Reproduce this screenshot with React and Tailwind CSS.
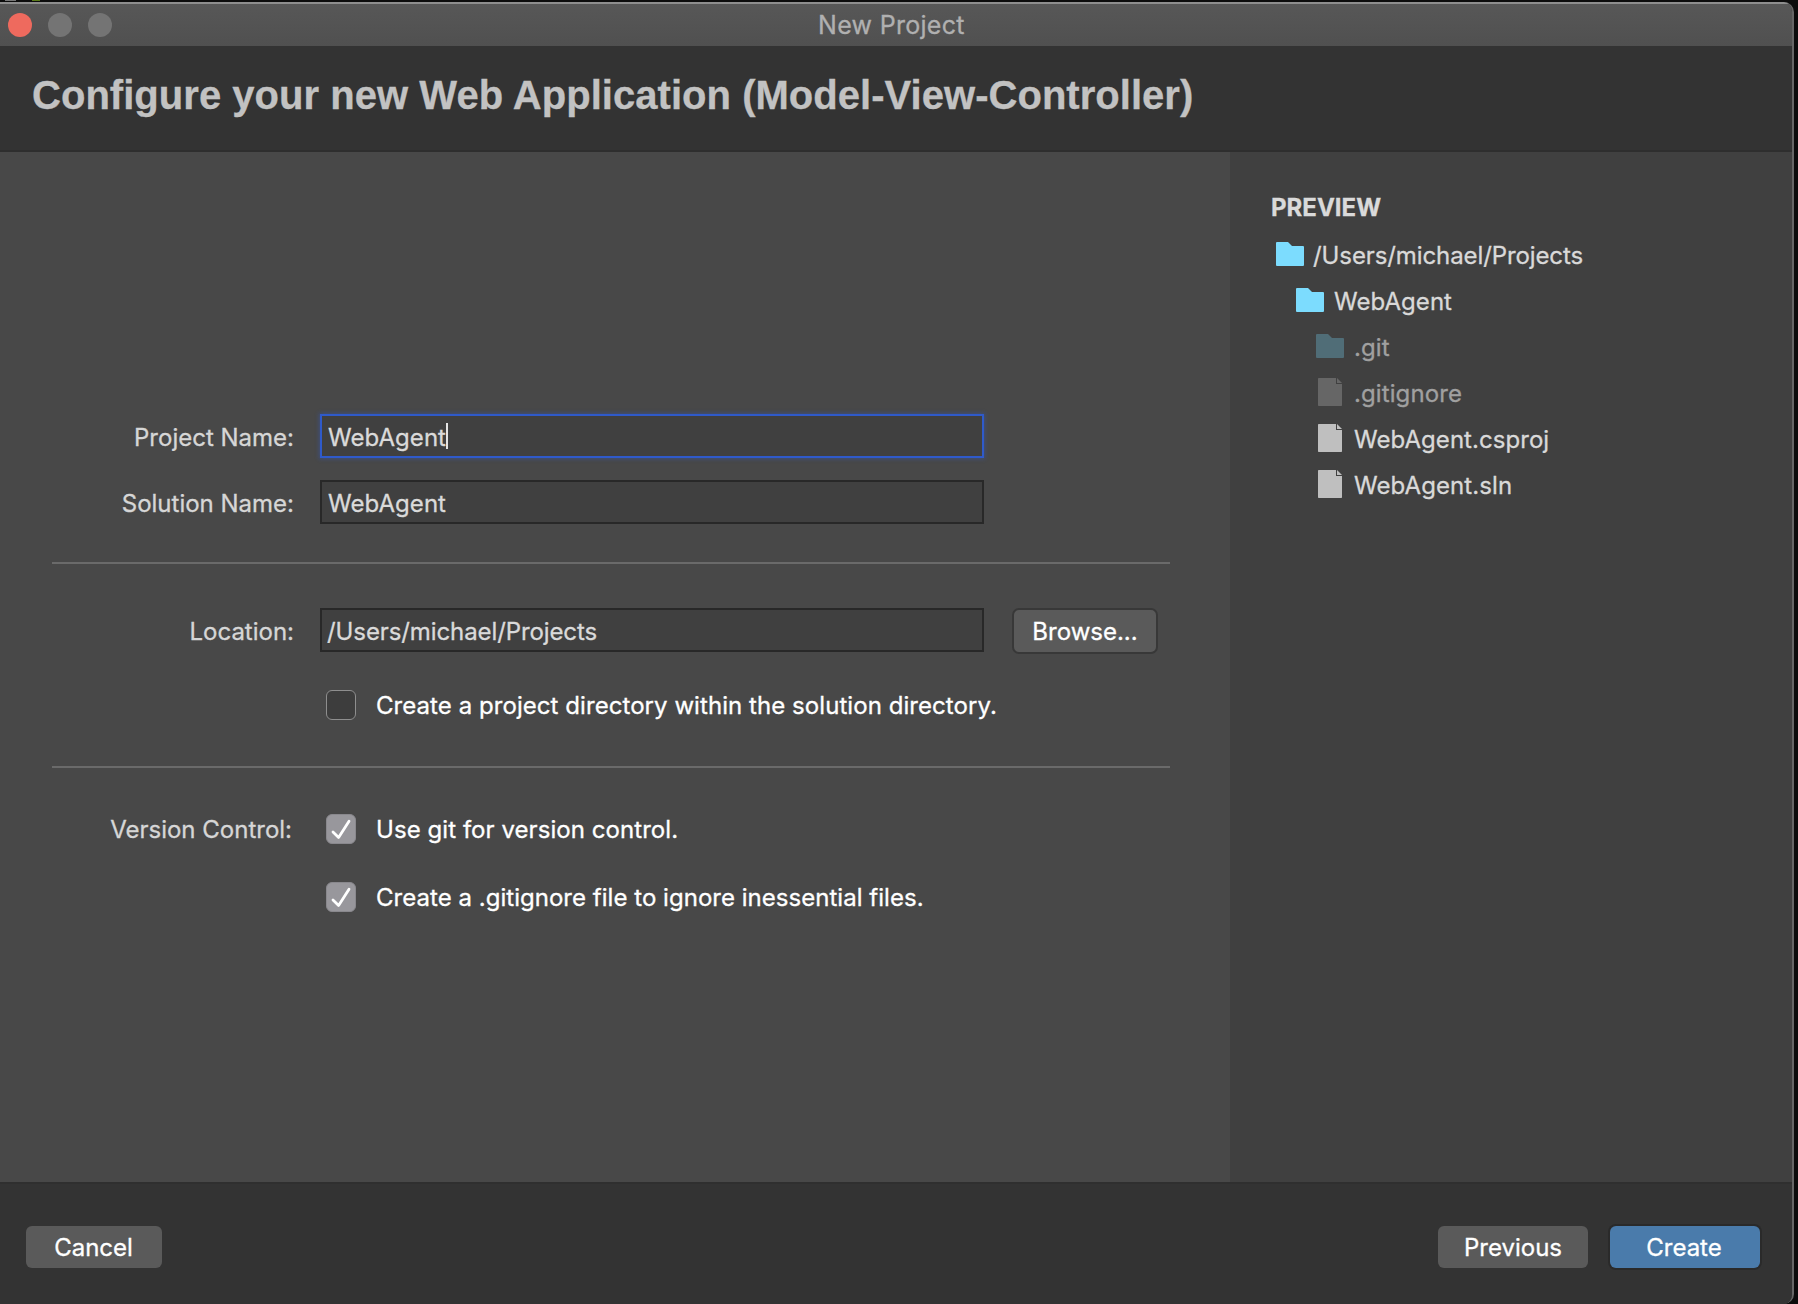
import React from "react";

function Folder({ dim }) {
  return (
    <svg viewBox="0 0 28 24" className={`h-6 w-7 shrink-0 ${dim ? "text-[#506d77]" : "text-[#7cdcfe]"}`} fill="currentColor">
      <path d="M1 0H12L16 4H27Q28 4 28 5V23Q28 24 27 24H1Q0 24 0 23V1Q0 0 1 0Z" />
    </svg>
  );
}

function File({ dim }) {
  return (
    <svg viewBox="0 0 28 28" className={`h-7 w-7 shrink-0 ${dim ? "text-[#666666]" : "text-[#bfbfbf]"}`} fill="currentColor">
      <path d="M2.7 0H20V6H26V27.3Q26 28 25.3 28H2.7Q2 28 2 27.3V0.7Q2 0 2.7 0Z" />
      <path d="M21 0L26 5H21Z" />
    </svg>
  );
}

const TREE = [
  { name: "/Users/michael/Projects", icon: "folder", pad: "pl-0", tracking: "-ml-px tracking-[-0.1px]" },
  { name: "WebAgent", icon: "folder", pad: "pl-5", tracking: "tracking-[0.05px]" },
  { name: ".git", icon: "folder", pad: "pl-10", dim: true, tracking: "tracking-[0.1px]" },
  { name: ".gitignore", icon: "file", pad: "pl-10", dim: true, tracking: "tracking-[0.1px]" },
  { name: "WebAgent.csproj", icon: "file", pad: "pl-10", tracking: "tracking-[0.05px]" },
  { name: "WebAgent.sln", icon: "file", pad: "pl-10", tracking: "tracking-[0.08px]" },
];

function TreeRow({ name, icon, pad, dim, tracking = "" }) {
  return (
    <li className={`flex h-[46px] items-center gap-2.5 ${pad}`}>
      {icon === "folder" ? <Folder dim={dim} /> : <File dim={dim} />}
      <span className={`pt-[3px] leading-[30px] ${tracking} ${dim ? "text-[#a0a0a0]" : "text-[#d9d9d9]"}`}>{name}</span>
    </li>
  );
}

function Label({ children, className = "pt-1" }) {
  return <div className={`w-[294px] shrink-0 text-right leading-[30px] text-[#d6d6d6] ${className}`}>{children}</div>;
}

function Field({ value, focused, tracking = "" }) {
  return (
    <div
      className={`ml-[26px] flex h-11 w-[664px] shrink-0 items-center border-2 bg-[#404040] pl-1.5 ${
        focused ? "border-[#2f5aca] shadow-[0_0_4px_1px_rgba(47,90,202,0.4)]" : "border-[#282828]"
      }`}
    >
      <span className={`pt-1 leading-[30px] text-[#dadada] ${tracking}`}>{value}</span>
      {focused && <span className="h-[26px] w-0.5 bg-[#e4e4e4]" />}
    </div>
  );
}

function Checkbox({ checked, children, tracking = "" }) {
  return (
    <div className="ml-8 flex items-center gap-5">
      {checked ? (
        <span className="flex size-[30px] items-center justify-center rounded-[6px] border border-[#89888d] bg-[#98979c]">
          <svg viewBox="0 0 28 28" className="size-7" fill="none" stroke="white" strokeWidth="2.8" strokeLinecap="round" strokeLinejoin="round">
            <path d="M6 17L11.6 22.4L22 6.2" />
          </svg>
        </span>
      ) : (
        <span className="size-[30px] rounded-[6px] border border-[#8e8e8e] bg-[#3d3d3d]" />
      )}
      <span className={`pt-0.5 leading-[30px] text-white ${tracking}`}>{children}</span>
    </div>
  );
}

function Separator({ className }) {
  return <div className={`ml-[52px] h-0.5 w-[1118px] bg-[#6a6a6a] ${className}`} />;
}

export default function App() {
  return (
    <div className="flex h-[1304px] w-[1798px] flex-col overflow-hidden bg-[#0c0c0c] font-['Inter',sans-serif] text-[24px] [-webkit-text-stroke:0.3px_currentColor]">
      <div className="flex h-0.5 shrink-0 items-start pl-[5px]">
        <div className="h-px w-[11px] bg-[#777777]" />
        <div className="ml-4 h-px w-2 bg-[#5a7a1a]" />
      </div>
      <div className="flex min-h-0 w-[1794px] flex-1 flex-col overflow-hidden rounded-tr-[10px] rounded-br-[10px] border-r-2 border-[#666666] bg-[#333333]">
        <div className="flex h-11 shrink-0 items-center gap-4 border-t-2 border-[#8e8e8e] bg-gradient-to-b from-[#575757] to-[#505050] pl-2">
          <span className="size-6 rounded-full bg-[#ee6a5e]" />
          <span className="size-6 rounded-full bg-[#747474]" />
          <span className="size-6 rounded-full bg-[#747474]" />
          <span className="ml-[690px] text-[25px] leading-[30px] tracking-[0.3px] text-[#b0b0b0]">New Project</span>
        </div>

        <header className="h-[106px] shrink-0 border-b-2 border-[#2e2e2e] bg-[#333333] pt-[26px] pl-8">
          <h1 className="font-['Liberation_Sans',sans-serif] text-[40px] leading-[46px] font-bold tracking-[0.035px] whitespace-nowrap text-[#c2c2c2]">
            Configure your new Web Application (Model-View-Controller)
          </h1>
        </header>

        <main className="flex h-[1030px] shrink-0">
          <section className="w-[1230px] shrink-0 bg-[#484848] pt-[262px]">
            <div className="flex h-11 items-center">
              <Label>Project Name:</Label>
              <Field value="WebAgent" focused tracking="tracking-[0.05px]" />
            </div>
            <div className="mt-[22px] flex h-11 items-center">
              <Label>Solution Name:</Label>
              <Field value="WebAgent" tracking="tracking-[0.05px]" />
            </div>
            <Separator className="mt-[38px]" />
            <div className="mt-11 flex h-11 items-center">
              <Label>Location:</Label>
              <Field value="/Users/michael/Projects" tracking="-ml-px tracking-[-0.1px]" />
              <button className="mt-0.5 ml-7 h-[46px] w-[146px] rounded-[7px] border-2 border-[#383838] bg-[#5a5a5a] pt-0.5 leading-[30px] text-white">
                Browse...
              </button>
            </div>
            <div className="mt-[38px] flex h-[30px] items-center">
              <Label />
              <Checkbox tracking="tracking-[0.06px]">Create a project directory within the solution directory.</Checkbox>
            </div>
            <Separator className="mt-[46px]" />
            <div className="mt-[46px] flex h-[30px] items-center">
              <Label className="pt-0.5 pr-[2px]">Version Control:</Label>
              <Checkbox checked tracking="tracking-[0.06px]">Use git for version control.</Checkbox>
            </div>
            <div className="mt-[38px] flex h-[30px] items-center">
              <Label />
              <Checkbox checked tracking="tracking-[0.03px]">Create a .gitignore file to ignore inessential files.</Checkbox>
            </div>
          </section>

          <aside className="flex-1 bg-[#404040] pt-[41px] pl-10">
            <h2 className="pl-px leading-[30px] font-bold text-[#dadada]">PREVIEW</h2>
            <ul className="mt-2 pl-1.5">
              {TREE.map((row) => (
                <TreeRow key={row.name} {...row} />
              ))}
            </ul>
          </aside>
        </main>

        <footer className="flex flex-1 items-start border-t-2 border-[#2f2f2f] bg-[#333333] pt-[42px] pr-8 pl-[26px]">
          <button className="h-[42px] w-[136px] rounded-[6px] bg-[#5a5a5a] pt-0.5 pr-px leading-[30px] text-white">Cancel</button>
          <button className="ml-auto h-[42px] w-[150px] rounded-[6px] bg-[#5a5a5a] pt-0.5 leading-[30px] text-white">Previous</button>
          <button className="ml-[22px] h-[42px] w-[150px] rounded-[6px] bg-[#4a7bab] pt-0.5 pr-0.5 leading-[30px] text-white shadow-[0_0_0_2px_#2a2a2a]">
            Create
          </button>
        </footer>
      </div>
    </div>
  );
}
